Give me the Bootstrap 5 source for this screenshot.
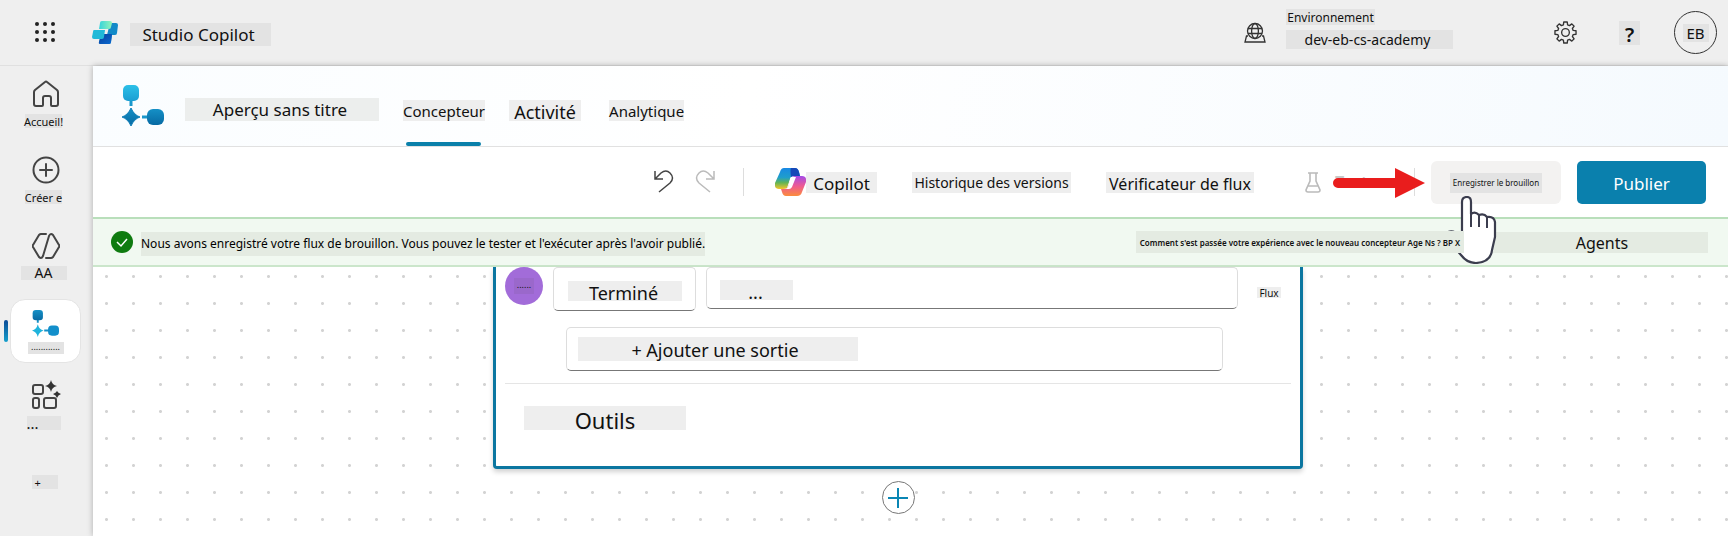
<!DOCTYPE html>
<html lang="fr">
<head>
<meta charset="utf-8">
<meta name="viewport" content="width=device-width, initial-scale=1">
<title>Studio Copilot</title>
<link rel="stylesheet" href="https://cdn.jsdelivr.net/npm/bootstrap@5.3.0/dist/css/bootstrap.min.css">
<style>
  body { font-family: "Noto Sans", "Open Sans", sans-serif; color: #111; background: #efefef; font-size: 15px; line-height: 1; overflow: hidden; }
  a, a:hover { color: inherit; text-decoration: none; }
  button { font-family: inherit; color: inherit; }
  svg { display: block; flex: none; }
  .plain { border: 0; background: none; padding: 0; line-height: 1; }
  .tone { background: #e3e3e3; display: flex; align-items: center; justify-content: center; white-space: nowrap; flex: none; padding-top: 2px; }
  .tone-soft { background: #eee; }
  .tone-green { background: #e4ebe2; }
  .fs-micro { font-size: 8px; }
  .fs-tiny { font-size: 9px; }
  .fs-small { font-size: 12px; }
  .fs-base { font-size: 14px; }
  .fs-mid { font-size: 16px; }
  .fs-title { font-size: 17px; }
  .fs-tab { font-size: 18px; }
  .fs-head { font-size: 22px; }

  .topbar { height: 66px; border-bottom: 1px solid #e0e0e0; padding-left: 34px; padding-right: 11px; }
  .brand-link { margin-left: 36px; }
  .app-name { width: 141px; height: 23px; margin: 3px 0 0 12px; padding-top: 0; padding-right: 4px; }
  .env-block { margin: -8px 101px 0 20px; }
  .env-label { width: 89px; height: 16px; }
  .env-name { width: 167px; height: 19px; margin-top: 5px; padding-right: 4px; }
  .help { width: 21px; height: 24px; font-size: 20px; font-weight: 600; margin: 0 34px 0 42px; padding-top: 4px; }
  .avatar { width: 43px; height: 43px; border: 1px solid #333; border-radius: 50%; }
  .avatar .tone { width: 26px; height: 18px; }

  .rail { width: 93px; flex: none; }
  .rail-item { height: 76px; display: flex; flex-direction: column; align-items: center; padding-top: 14px; padding-right: 2px; gap: 6px; position: relative; }
  .rail-item > .tone { width: 37px; height: 14px; margin-right: 4px; padding-top: 0; }
  .rail-item > .rail-code { width: 46px; }
  .rail-item > .rail-more { width: 34px; justify-content: flex-start; }
  .rail-item > .rail-plus { width: 26px; justify-content: flex-start; padding-left: 3px; margin-right: 2px; }
  .rail-label { font-size: 11px; }
  .rail-item.active { height: 84px; padding-top: 5px; }
  .rail-item.active::before { content: ""; position: absolute; left: 4px; top: 26px; width: 4px; height: 22px; border-radius: 2px; background: linear-gradient(#0b4a96, #16a0cc); }
  .rail-item.tools { padding-top: 2px; }
  .rail-item.more { padding-top: 21px; }
  .rail-card { width: 71px; height: 64px; border-radius: 15px; background: #fff; border: 1px solid #e4e4e4; display: flex; flex-direction: column; align-items: center; padding-top: 10px; gap: 5px; }
  .rail-card .tone { width: 36px; height: 12px; padding: 0 0 4px; }

  .work { box-shadow: 0 0 6px rgba(0,0,0,.28); background: #fff; min-width: 0; height: calc(100vh - 66px); }
  .flow-head { height: 81px; border-bottom: 1px solid #e1e1e1; background: linear-gradient(100deg, #fafdff, #fff 40%, #f5fafe); padding-left: 29px; }
  .flow-name { width: 194px; height: 23px; margin: 6px 0 0 21px; background: #eceeed; padding-top: 0; padding-right: 4px; }
  .tabs { margin-left: 24px; gap: 24px; height: 80px; padding-top: 8px; }
  .tabs a { position: relative; }
  .tabs a .tone { height: 21px; }
  .tabs .tab-activity { width: 72px; padding-top: 4px; }
  .tabs a:last-child { margin-left: 4px; }
  .tabs a.current::after { content: ""; position: absolute; left: 3px; right: 4px; bottom: -25px; height: 4px; border-radius: 2px; background: #0a80aa; }

  .toolbar { height: 70px; padding-right: 22px; }
  .tool-label { height: 21px; }
  .tool-redo { margin: 0 28px 0 21px; }
  .tool-copilot { margin-left: 31px; }
  .tool-copilot .tone { width: 71px; }
  .tool-history { width: 159px; margin-left: 35px; }
  .tool-check { width: 148px; margin: 0 51px 0 35px; padding-top: 4px; }
  .tool-test { width: 126px; }
  .tool-test button { color: #c8c8c8; gap: 14px; }
  .sep { width: 1px; height: 28px; background: #ddd; flex: none; }
  .btn-draft { width: 130px; height: 43px; border-radius: 6px; background: #f3f2f1; display: flex; align-items: center; justify-content: center; padding-top: 2px; }
  .btn-draft .tone { width: 92px; height: 20px; padding: 0; }
  .btn-publish { width: 129px; height: 43px; border-radius: 5px; background: #0a80ad; border: 0; color: #fff; margin-left: 16px; padding-top: 3px; }
  .pointer-arrow { position: absolute; left: 28px; top: -1px; z-index: 2; }
  .pointer-hand { position: absolute; left: 14px; top: 35px; z-index: 3; pointer-events: none; }

  .notice { height: 50px; background: #f1f9f1; border-top: 2px solid #b9dfbb; border-bottom: 2px solid #cbe6cb; padding: 0 20px 0 18px; }
  .notice-text { height: 24px; margin: 3px 0 0 8px; padding-top: 0; color: #000; }
  .notice-ask { height: 22px; width: 328px; font-weight: 600; position: relative; z-index: 4; }
  .notice-link { width: 244px; height: 21px; padding-left: 32px; }
  .canvas { flex: 1; min-height: 0; background-color: #fff; background-image: radial-gradient(circle, #d3d3d3 1px, transparent 2px); background-size: 27px 27px; background-position: 0 -4px; }
  .node { width: 810px; height: 202px; background: #fff; border: 3px solid #0b76a0; border-top: 0; border-radius: 0 0 4px 4px; box-shadow: 0 3px 5px rgba(0,0,0,.18); padding: 0 9px; margin-right: 25px; }
  .node hr { margin: 12px 0 22px; border-color: #999; }
  .dot-type { width: 38px; height: 38px; border-radius: 50%; background: #a26cd9; flex: none; }
  .dot-type .tone { width: 20px; height: 16px; background: #9a68cb; padding: 0 0 4px; }
  .field { border: 1px solid #ddd; border-bottom-color: #777; border-radius: 5px; background: #fff; display: flex; align-items: center; }
  .field-state { width: 143px; height: 44px; margin-left: 10px; padding-top: 4px; justify-content: center; }
  .field-state .tone { width: 114px; height: 20px; padding-top: 4px; padding-right: 2px; }
  .field-value { width: 532px; height: 42px; margin-left: 10px; padding: 4px 0 0 13px; }
  .field-value .tone { width: 73px; height: 20px; padding-top: 4px; padding-right: 2px; }
  .field-add { width: 657px; height: 44px; margin: 16px 0 0 61px; padding-left: 11px; }
  .field-add .tone { width: 280px; height: 24px; padding-right: 6px; }
  .flux-tag { font-size: 10px; height: 11px; width: 24px; margin: 20px 0 0 19px; padding-top: 0; }
  .node .node-title { width: 162px; height: 24px; margin: 0 0 0 19px; padding-top: 5px; }
  .add-node { width: 33px; height: 33px; border: 1px solid #777; border-radius: 50%; background: #fff; display: flex; align-items: center; justify-content: center; margin: 12px 25px 0 0; }
</style>
</head>
<body>
<svg width="0" height="0" class="position-absolute" aria-hidden="true">
  <defs>
    <linearGradient id="ga" x1="0" y1="0" x2="0" y2="1"><stop offset="0" stop-color="#2cc0e8"/><stop offset="1" stop-color="#1b9ed2"/></linearGradient>
    <linearGradient id="gb" x1="0" y1="0" x2="0" y2="1"><stop offset="0" stop-color="#1590c6"/><stop offset="1" stop-color="#076aa3"/></linearGradient>
    <linearGradient id="gc" x1="0" y1="0" x2="1" y2="0"><stop offset="0" stop-color="#35d3dc"/><stop offset="1" stop-color="#93f3b8"/></linearGradient>
    <linearGradient id="gd" x1="0" y1="0" x2="1" y2="1"><stop offset="0" stop-color="#0a3f9c"/><stop offset="1" stop-color="#0a6ad0"/></linearGradient>
    <linearGradient id="ge" x1="0" y1="0" x2="0" y2="1"><stop offset="0" stop-color="#1888e4"/><stop offset=".45" stop-color="#1f9ecb"/><stop offset=".7" stop-color="#62b455"/><stop offset="1" stop-color="#f5c52a"/></linearGradient>
    <linearGradient id="gf" x1="0" y1="0" x2="0" y2="1"><stop offset="0" stop-color="#a44be8"/><stop offset=".5" stop-color="#ee5a92"/><stop offset="1" stop-color="#fb8c3c"/></linearGradient>
  </defs>
</svg>

<header class="topbar d-flex align-items-center">
  <button class="plain" aria-label="Lanceur d'applications">
    <svg width="22" height="22" fill="#222"><circle cx="3" cy="2" r="2"/><circle cx="11" cy="2" r="2"/><circle cx="19" cy="2" r="2"/><circle cx="3" cy="10" r="2"/><circle cx="11" cy="10" r="2"/><circle cx="19" cy="10" r="2"/><circle cx="3" cy="18" r="2"/><circle cx="11" cy="18" r="2"/><circle cx="19" cy="18" r="2"/></svg>
  </button>
  <a href="#" class="d-flex align-items-center brand-link">
    <svg width="26" height="24" viewBox="0 0 26 24"><path d="M18 2h6q2 0 2 2l-1 8q0 2-2 2h-3l-1 7q0 2-2 2H9q-2 0-2-2l2-7h6z" fill="#128ac8"/><path d="M9 13h11l-1 8q0 2-2 2H9q-3 0-2-2z" fill="url(#gd)"/><path d="M2 9h11l-1 7q0 2-2 2H2q-2 0-2-2l1-5q0-2 1-2z" fill="#20b9d8"/><path d="M10 0h8q2 0 2 2l-1 4q0 2-2 2H7l1-6q0-2 2-2z" fill="url(#gc)"/></svg>
    <span class="tone app-name fs-title">Studio Copilot</span>
  </a>
  <div class="ms-auto d-flex align-items-center">
    <svg width="22" height="22" viewBox="0 0 22 22" fill="none" stroke="#333" stroke-width="1.300"><circle cx="11" cy="9" r="7.500"/><ellipse cx="11" cy="9" rx="3.400" ry="7.500"/><path d="M4 6.500h14M4 11.500h14M4 14H2.500L1 20h20l-1.500-6H18M1 20h20"/></svg>
    <div class="env-block">
      <div class="tone env-label fs-small">Environnement</div>
      <div class="tone env-name fs-base">dev-eb-cs-academy</div>
    </div>
    <button class="plain" aria-label="Paramètres">
      <svg width="23" height="23" viewBox="-12 -12 24 24" fill="none" stroke="#333" stroke-width="1.400" stroke-linejoin="round"><circle r="4"/><path d="M-2.200-8 -1.800-11H1.800L2.200-8 4.200-7.200 6.600-9 9-6.600 7.200-4.200 8-2.200 11-1.800V1.800L8 2.200 7.200 4.200 9 6.600 6.600 9 4.200 7.200 2.200 8 1.800 11H-1.800L-2.200 8-4.200 7.200-6.600 9-9 6.600-7.200 4.200-8 2.200-11 1.800V-1.800L-8-2.200-7.200-4.200-9-6.600-6.600-9-4.200-7.200Z"/></svg>
    </button>
    <button class="plain tone help">?</button>
    <button class="plain avatar d-flex align-items-center justify-content-center"><span class="tone">EB</span></button>
  </div>
</header>

<div class="d-flex">
  <nav class="rail">
    <a href="#" class="rail-item">
      <svg width="28" height="28" viewBox="0 0 28 28" fill="none" stroke="#444" stroke-width="2" stroke-linejoin="round"><path d="M2 12q0-1 1-2L13 2q1-1 2 0l10 8q1 1 1 2v12q0 2-2 2h-4q-1 0-1-1v-7q0-2-2-2h-4q-2 0-2 2v7q0 1-1 1H4q-2 0-2-2z"/></svg>
      <span class="tone rail-label">Accueil!</span>
    </a>
    <a href="#" class="rail-item">
      <svg width="28" height="28" viewBox="0 0 28 28" fill="none" stroke="#444" stroke-width="2" stroke-linecap="round"><circle cx="14" cy="14" r="12.500"/><path d="M14 8v12M8 14h12"/></svg>
      <span class="tone rail-label">Créer e</span>
    </a>
    <a href="#" class="rail-item">
      <svg width="28" height="28" viewBox="0 0 28 28" fill="none" stroke="#444" stroke-width="2" stroke-linejoin="round" stroke-linecap="round"><path d="M14 2H9q-1 0-2 1L1 13q-1 1 0 2l6 10q1 1 2 1 1 0 2-2l6-20q1-2 2-2 1 0 2 1l6 10q1 1 0 2l-6 10q-1 1-2 1h-5"/></svg>
      <span class="tone rail-code fs-base">AA</span>
    </a>
    <a href="#" class="rail-item active">
      <span class="rail-card">
        <svg width="27" height="27" viewBox="0 0 42 42"><path d="M9 20v-5M19 32h8" stroke="#1590c6" stroke-width="3"/><rect x="1" y="0" width="16" height="16" rx="5" fill="url(#gb)"/><rect x="25" y="24" width="17" height="16" rx="6" fill="#128fcb"/><path d="M9 22q2 8 9 10-7 2-9 10-2-8-9-10 7-2 9-10z" fill="#1fb3dc"/></svg>
        <span class="tone fs-tiny">............</span>
      </span>
    </a>
    <a href="#" class="rail-item tools">
      <svg width="30" height="30" viewBox="0 0 30 30" fill="none" stroke="#444" stroke-width="2"><rect x="2" y="5" width="10" height="9" rx="2"/><rect x="2" y="18" width="6" height="10" rx="2"/><rect x="13" y="18" width="12" height="10" rx="2"/><path d="M20 0q1 5 6 6-5 1-6 6-1-5-6-6 5-1 6-6zM26 11q1 2 4 3-3 1-4 4-1-3-4-4 3-1 4-3z" fill="#333" stroke="none"/></svg>
      <span class="tone rail-more">...</span>
    </a>
    <a href="#" class="rail-item more"><span class="tone rail-plus rail-label">+</span></a>
  </nav>

  <main class="work flex-grow-1 d-flex flex-column">
    <div class="flow-head d-flex align-items-center">
      <svg width="42" height="42" viewBox="0 0 42 42"><path d="M9 21v-6M20 32h8" stroke="#1a98cc" stroke-width="3"/><rect x="1" y="0" width="16" height="16" rx="5" fill="url(#ga)"/><rect x="25" y="24" width="17" height="16" rx="6" fill="url(#gb)"/><path d="M9 23q3 7 9 9-6 2-9 9-3-7-9-9 6-2 9-9z" fill="url(#gb)" stroke="#0f7fb8"/></svg>
      <span class="tone flow-name fs-title">Aperçu sans titre</span>
      <nav class="tabs d-flex align-items-center">
        <a href="#" class="current"><span class="tone tone-soft">Concepteur</span></a>
        <a href="#"><span class="tone tone-soft fs-tab tab-activity">Activité</span></a>
        <a href="#"><span class="tone tone-soft">Analytique</span></a>
      </nav>
    </div>

    <div class="toolbar d-flex align-items-center justify-content-end">
      <button class="plain" aria-label="Annuler"><svg width="20" height="24" viewBox="0 0 20 24" fill="none" stroke="#444" stroke-width="1.500"><path d="M1 1v8h8M1 9l6-6q5-4 9 0 5 5 0 10L5 22"/></svg></button>
      <button class="plain tool-redo" aria-label="Rétablir"><svg width="20" height="24" viewBox="0 0 20 24" fill="none" stroke="#bbb" stroke-width="1.500"><path d="M19 1v8h-8M19 9l-6-6Q8-1 4 3q-5 5 0 10l11 9"/></svg></button>
      <span class="sep"></span>
      <button class="plain d-flex align-items-center tool-copilot">
        <svg width="31" height="28" viewBox="0 0 31 28"><path d="M9 0h11q3 0 4 4l1 4h-6q-3 0-4 3l-3 9q-1 1-4 1H4q-5 0-4-6L5 4q1-4 4-4z" fill="url(#ge)"/><path d="M16 0h4q3 0 4 4l1 4h-6q-2 0-3 1-1-7 0-9z" fill="#1648b8"/><path d="M20 8h7q5 0 4 6l-4 10q-1 4-5 4H11q-3 0-4-4l-1-3h4q2 0 3-2l3-8q1-3 4-3z" fill="url(#gf)"/><path d="M16 9h5l-4 10q-1 2-3 2h-4q2 0 3-2l2-7q0-2 1-3z" fill="#fff"/></svg>
        <span class="tone tone-soft tool-label fs-title">Copilot</span>
      </button>
      <button class="plain tone tone-soft tool-label tool-history fs-base">Historique des versions</button>
      <button class="plain tone tone-soft tool-label tool-check fs-mid">Vérificateur de flux</button>
      <span class="position-relative d-flex align-items-center tool-test">
        <button class="plain d-flex align-items-center" disabled><svg width="16" height="21" viewBox="0 0 16 21" fill="none" stroke="#bbb" stroke-width="1.600"><path d="M3 1h10M5 1v8L1 18q0 2 2 2h10q2 0 2-2L11 9V1M3 14h10"/></svg><b class="fs-mid">Test</b></button>
        <svg class="pointer-arrow" width="92" height="32" viewBox="0 0 92 32"><path d="M5 11h57V1l30 15-30 15V21H5a5 5 0 0 1 0-10z" fill="#e91d1d"/></svg>
        <span class="sep ms-auto me-3"></span>
      </span>
      <div class="position-relative">
        <button class="plain btn-draft"><span class="tone fs-micro">Enregistrer le brouillon</span></button>
        <svg class="pointer-hand" width="54" height="68" viewBox="0 0 54 68"><path d="M17 44V6q0-5 5-5 4 0 4 5v12q4-3 8 1 5-2 8 2 7-1 8 5v15l-3 13q-1 12-16 13-9 0-15-8L3 44q-4-5 0-8 6-2 10 3z" fill="#fff" stroke="#3b3d4e" stroke-width="2.200" stroke-linejoin="round"/><path d="M26 17v14M34 19v12M42 21v11" stroke="#3b3d4e" stroke-width="2"/></svg>
      </div>
      <button class="btn-publish fs-title">Publier</button>
    </div>

    <div class="notice d-flex align-items-center">
      <svg width="22" height="22" viewBox="0 0 22 22"><circle cx="11" cy="11" r="11" fill="#0f7b10"/><path d="M6 11l4 4 6-7" stroke="#fff" stroke-width="1.500" fill="none"/></svg>
      <span class="tone tone-green fs-small notice-text">Nous avons enregistré votre flux de brouillon. Vous pouvez le tester et l'exécuter après l'avoir publié.</span>
      <span class="tone tone-green fs-micro ms-auto notice-ask">Comment s'est passée votre expérience avec le nouveau concepteur Age Ns ? BP X</span>
      <a href="#" class="tone tone-green notice-link fs-mid">Agents</a>
    </div>

    <section class="canvas d-flex flex-column align-items-center">
      <div class="node">
        <div class="d-flex align-items-start">
          <span class="dot-type d-flex align-items-center justify-content-center"><span class="tone fs-tiny">......</span></span>
          <button class="plain field field-state"><span class="tone tone-soft fs-tab">Terminé</span></button>
          <button class="plain field field-value"><span class="tone tone-soft fs-tab">...</span></button>
          <span class="tone tone-soft flux-tag">Flux</span>
        </div>
        <button class="plain field field-add"><span class="tone tone-soft fs-tab">+ Ajouter une sortie</span></button>
        <hr>
        <h2 class="tone tone-soft fs-head fw-normal node-title">Outils</h2>
      </div>
      <button class="plain add-node" aria-label="Ajouter"><svg width="20" height="20" stroke="#0a86b4" stroke-width="2"><path d="M10 0v20M0 10h20"/></svg></button>
    </section>
  </main>
</div>
<script src="https://cdn.jsdelivr.net/npm/bootstrap@5.3.0/dist/js/bootstrap.bundle.min.js"></script>
</body>
</html>
